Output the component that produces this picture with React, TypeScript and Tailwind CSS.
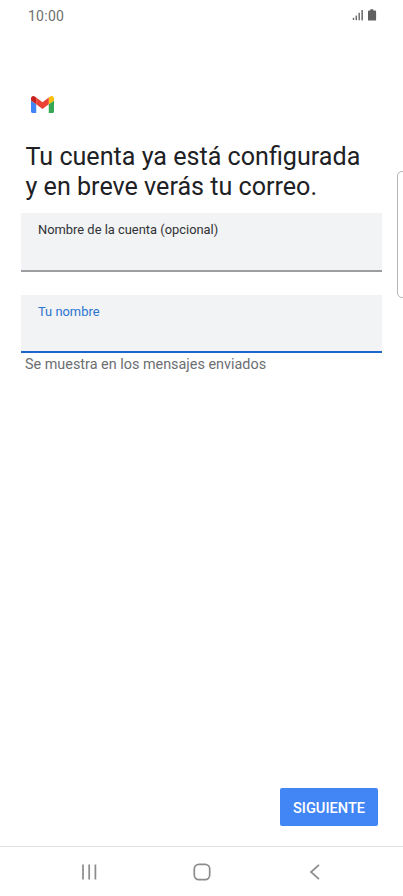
import React, { useState } from 'react';

interface FieldProps {
  label: string;
  value: string;
  onChange: (value: string) => void;
  active?: boolean;
}

const StatusBar: React.FC = () => (
  <div className="flex h-8 shrink-0 items-center justify-between pl-7 pr-[26px] text-[#707070]">
    <span className="text-[14px] leading-4 tracking-[0.25px]">10:00</span>
    <div className="flex items-center gap-1">
      <svg width="12" height="12" viewBox="0 0 12 12" fill="#686868">
        <rect x="0.8" y="7.8" width="1.4" height="2.2" />
        <rect x="3.6" y="5.6" width="1.4" height="4.6" />
        <rect x="6.5" y="2.8" width="1.4" height="7.4" />
        <rect x="9.4" y="0" width="1.5" height="10.4" />
      </svg>
      <svg className="relative -top-px" width="9" height="13" viewBox="0 0 9 13" fill="#606060">
        <path d="M2.3 0.3h3v1.2h1.8q1 0 1 1v8.4q0 .6-.6 .6H.6q-.6 0-.6-.6V2.5q0-1 1-1h1.3z" />
      </svg>
    </div>
  </div>
);

const GmailLogo: React.FC = () => (
  <svg width="23" height="17" viewBox="52 42 88 66" preserveAspectRatio="none">
    <path fill="#4285f4" d="M58 108h14V74L52 59v43c0 3.32 2.69 6 6 6" />
    <path fill="#34a853" d="M120 108h14c3.32 0 6-2.69 6-6V59l-20 15" />
    <path fill="#fbbc04" d="M120 48v26l20-15v-8c0-7.42-8.47-11.65-14.4-7.2" />
    <path fill="#ea4335" d="M72 74V48l24 18 24-18v26L96 92" />
    <path fill="#c5221f" d="M52 51v8l20 15V48l-5.6-4.2c-5.94-4.45-14.4-.22-14.4 7.2" />
  </svg>
);

const Field: React.FC<FieldProps> = ({ label, value, onChange, active }) => (
  <label
    className={
      active
        ? 'flex h-[58px] flex-col border-b-2 border-[#1f66cc] bg-[#f1f3f4] px-[17px] pt-[8px] text-[#2b74d2]'
        : 'flex h-[59px] flex-col border-b-2 border-[#9c9da0] bg-[#f1f3f4] px-[17px] pt-[8px] text-[#303134]'
    }
  >
    <span className="text-[12.9px] leading-[18px]">{label}</span>
    <input
      className="h-7 w-full bg-transparent text-base text-[#202124] outline-none"
      value={value}
      onChange={(e) => onChange(e.target.value)}
    />
  </label>
);

const NavigationBar: React.FC = () => (
  <nav className="flex h-[50px] shrink-0 items-center justify-between border-t border-[#e2e2e2] pl-[81px] pr-[80px]">
    <button aria-label="Recientes">
      <svg width="16" height="16" viewBox="0 0 16 16" stroke="#8c8c8c" strokeWidth="1.7">
        <path d="M2 .5v15M8.2 .5v15M14.4 .5v15" />
      </svg>
    </button>
    <button aria-label="Inicio">
      <svg width="18" height="18" viewBox="0 0 18 18" fill="none" stroke="#8c8c8c" strokeWidth="1.7">
        <rect x="1.3" y="1.3" width="15.4" height="15.4" rx="4.6" />
      </svg>
    </button>
    <button aria-label="Atrás">
      <svg width="16" height="16" viewBox="0 0 16 16" fill="none" stroke="#8c8c8c" strokeWidth="1.7">
        <path d="M12 .8 4 8l8 7.2" />
      </svg>
    </button>
  </nav>
);

const App: React.FC = () => {
  const [accountName, setAccountName] = useState('');
  const [userName, setUserName] = useState('');

  return (
    <div className="relative flex h-screen w-full flex-col overflow-hidden bg-white font-[Roboto,sans-serif]">
      <StatusBar />

      <main className="flex flex-1 flex-col pl-[21px] pr-[21px] pt-16">
        <div className="pl-[10px]">
          <GmailLogo />
        </div>

        <h1 className="mt-[29px] whitespace-nowrap pl-[4.5px] text-[25.12px] leading-[30px] text-[#202124]">
          Tu cuenta ya está configurada
          <br />y en breve verás tu correo.
        </h1>

        <div className="mt-[11px] flex flex-col gap-[23px]">
          <Field label="Nombre de la cuenta (opcional)" value={accountName} onChange={setAccountName} />
          <Field label="Tu nombre" value={userName} onChange={setUserName} active />
        </div>
        <p className="pl-1 pt-[2px] text-[14.4px] leading-5 text-[#6c6e71]">
          Se muestra en los mensajes enviados
        </p>

        <button className="mb-5 mr-1 mt-auto h-[38px] w-[98px] self-end rounded-[2px] bg-[#4285f4] pt-[3px] text-[14.6px] font-medium text-white">
          SIGUIENTE
        </button>
      </main>

      <NavigationBar />

      {/* edge panel handle */}
      <div className="absolute -right-2 top-[171px] h-[127px] w-[14px] rounded-[5px] border border-[#b5b5b5] bg-white" />
    </div>
  );
};

export default App;
